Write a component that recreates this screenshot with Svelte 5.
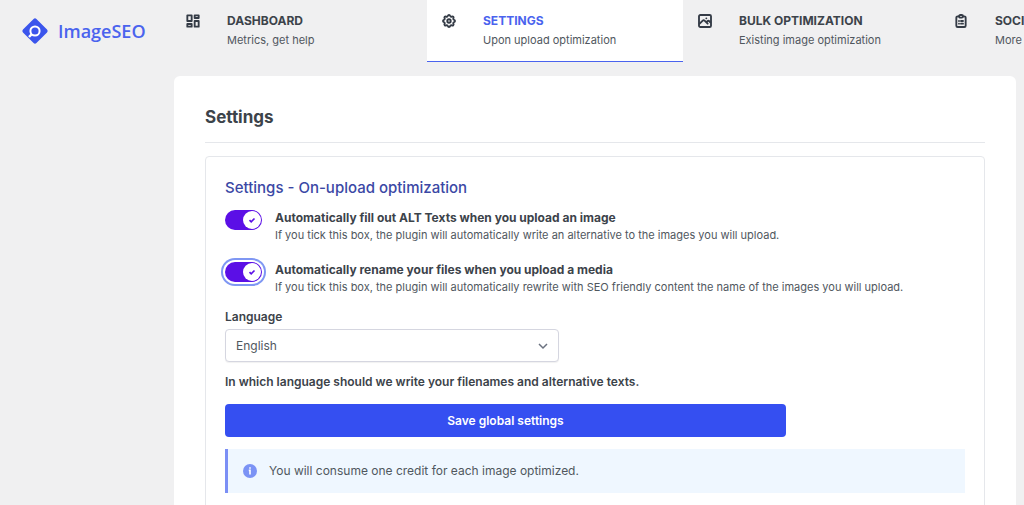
<script>
  const tabs = [
    { icon: 'grid', title: 'Dashboard', text: 'Metrics, get help' },
    { icon: 'cog', title: 'Settings', text: 'Upon upload optimization', active: true },
    { icon: 'image', title: 'Bulk optimization', text: 'Existing image optimization' },
    { icon: 'clipboard', title: 'Social media', text: 'More traffic' }
  ];

  let options = $state([
    {
      id: 'fill-alt',
      title: 'Automatically fill out ALT Texts when you upload an image',
      text: 'If you tick this box, the plugin will automatically write an alternative to the images you will upload.',
      checked: true
    },
    {
      id: 'rename-files',
      title: 'Automatically rename your files when you upload a media',
      text: 'If you tick this box, the plugin will automatically rewrite with SEO friendly content the name of the images you will upload.',
      checked: true
    }
  ]);

  let current = $state('rename-files');
  let language = $state('en');
</script>

<header>
  <a class="logo" href="#home">
    <svg width="28" height="28" viewBox="0 0 28 28">
      <rect x="4.5" y="4.5" width="19" height="19" rx="2" transform="rotate(45 14 14)" fill="#3b55ec" />
      <circle cx="14" cy="14" r="4.6" fill="none" stroke="#fff" stroke-width="2" />
      <path d="M10.8 17.2L8 20" stroke="#fff" stroke-width="2.4" />
    </svg>
    <span>ImageSEO</span>
  </a>
  <nav>
    {#each tabs as tab}
      <a class="tab" class:active={tab.active} href="#{tab.icon}">
        <svg class="icon" viewBox="0 0 24 24">
          {#if tab.icon === 'grid'}
            <path d="M3.5 3.5h6.5v8.500H3.500zM14.500 3.500h6v4h-6zM3.500 16.500h6.500v4H3.500zM14.500 12h6v8.500h-6z" />
          {:else if tab.icon === 'cog'}
            <path d="M10.325 4.317c.426-1.756 2.924-1.756 3.35 0a1.724 1.724 0 002.573 1.066c1.543-.94 3.31.826 2.37 2.37a1.724 1.724 0 001.065 2.572c1.756.426 1.756 2.924 0 3.35a1.724 1.724 0 00-1.066 2.573c.94 1.543-.826 3.31-2.37 2.37a1.724 1.724 0 00-2.572 1.065c-.426 1.756-2.924 1.756-3.35 0a1.724 1.724 0 00-2.573-1.066c-1.543.94-3.31-.826-2.37-2.37a1.724 1.724 0 00-1.065-2.572c-1.756-.426-1.756-2.924 0-3.35a1.724 1.724 0 001.066-2.573c-.94-1.543.826-3.31 2.37-2.37.996.608 2.296.07 2.572-1.065z" />
            <circle cx="12" cy="12" r="2.6" />
          {:else if tab.icon === 'image'}
            <rect x="3" y="3" width="18" height="18" rx="2" />
            <path d="M4 16l4.6-4.6a2 2 0 012.8 0L16 16m-2-2l1.6-1.6a2 2 0 012.8 0L20 14M14 8h.01" />
          {:else}
            <path d="M9 5H7a2 2 0 00-2 2v12a2 2 0 002 2h10a2 2 0 002-2V7a2 2 0 00-2-2h-2" />
            <rect x="9" y="3" width="6" height="4" rx="2" />
            <path d="M9 12h.01M12 12h3M9 16h.01M12 16h3" />
          {/if}
        </svg>
        <span class="tab-text">
          <strong>{tab.title}</strong>
          <span>{tab.text}</span>
        </span>
      </a>
    {/each}
  </nav>
</header>

<main>
  <h1>Settings</h1>
  <section>
    <h2>Settings - On-upload optimization</h2>

    <div class="options">
      {#each options as option}
        <div class="option">
          <label class="toggle" class:current={current === option.id}>
            <input
              type="checkbox"
              aria-labelledby={option.id}
              bind:checked={option.checked}
              onfocus={() => (current = option.id)}
            />
            <span class="knob">
              <svg width="10" height="10" viewBox="0 0 12 12">
                <path d="M3 6.2l2 2 4-4" />
              </svg>
            </span>
          </label>
          <div>
            <h3 id={option.id}>{option.title}</h3>
            <p>{option.text}</p>
          </div>
        </div>
      {/each}
    </div>

    <label class="label" for="language">Language</label>
    <div class="select">
      <select id="language" bind:value={language}>
        <option value="en">English</option>
        <option value="fr">French</option>
        <option value="es">Spanish</option>
      </select>
      <svg width="10" height="10" viewBox="0 0 10 10">
        <path d="M1 3l4 4 4-4" />
      </svg>
    </div>
    <p class="hint">In which language should we write your filenames and alternative texts.</p>

    <button type="button">Save global settings</button>

    <div class="notice">
      <svg width="14" height="14" viewBox="0 0 14 14">
        <circle cx="7" cy="7" r="7" fill="#7b93f5" />
        <path d="M7 3.2v1.6M5.8 6.4H7v4.2" fill="none" stroke="#fff" stroke-width="1.6" />
      </svg>
      <p>You will consume one credit for each image optimized.</p>
    </div>
  </section>
</main>

<style>
  :global(body) {
    margin: 0;
    background: #f0f0f1;
    color: #3c434a;
    font-family: Inter, "Liberation Sans", sans-serif;
    font-size: 12px;
    line-height: 16px;
    overflow-x: hidden;
  }

  h1, h2, h3, p {
    margin: 0;
  }

  a {
    color: inherit;
    text-decoration: none;
  }

  header {
    display: flex;
    overflow: hidden;
  }

  .logo {
    display: flex;
    flex: none;
    align-items: center;
    gap: 9px;
    box-sizing: border-box;
    width: 171px;
    padding-left: 21px;
    color: #4a63ee;
    font-family: "Open Sans", sans-serif;
    font-size: 18px;
    font-weight: 600;
  }

  nav {
    display: flex;
  }

  .tab {
    display: flex;
    flex: none;
    gap: 26px;
    box-sizing: border-box;
    width: 256px;
    padding: 13px 14px;
    border-bottom: 1px solid transparent;
  }

  .tab.active {
    background: #fff;
    border-bottom-color: #4a63ee;
  }

  .icon {
    width: 16px;
    height: 16px;
    fill: none;
    stroke: #343b46;
    stroke-width: 2.8;
    stroke-linecap: round;
    stroke-linejoin: round;
  }

  .tab-text {
    display: grid;
    gap: 3px;
    font-size: 11px;
    color: #50575e;
  }

  .tab-text strong {
    color: #3c434a;
    font-size: 12px;
    text-transform: uppercase;
  }

  .tab.active strong {
    color: #4a63ee;
  }

  main {
    margin: 14px 8px 0 174px;
    padding: 30px 31px;
    background: #fff;
    border-radius: 6px;
  }

  h1 {
    padding-bottom: 14px;
    border-bottom: 1px solid #e5e7eb;
    font-size: 17px;
    line-height: 22px;
  }

  section {
    margin-top: 13px;
    padding: 21px 19px;
    border: 1px solid #e5e7eb;
    border-radius: 4px;
  }

  h2 {
    margin-bottom: 12px;
    color: #3b48a5;
    font-size: 15px;
    font-weight: 500;
    line-height: 20px;
  }

  .options {
    display: grid;
    gap: 19px;
    margin-bottom: 14px;
  }

  .option {
    display: flex;
    gap: 13px;
  }

  .option p {
    margin-top: 1px;
    color: #50575e;
    font-size: 11px;
  }

  h3 {
    font-size: 12px;
  }

  .toggle {
    display: flex;
    flex: none;
    justify-content: flex-end;
    box-sizing: border-box;
    width: 37px;
    height: 20px;
    padding: 1px;
    border-radius: 10px;
    background: #5b0fe6;
    cursor: pointer;
  }

  .toggle:not(:has(:checked)) {
    justify-content: flex-start;
    background: #d1d5db;
  }

  .toggle.current {
    box-shadow: 0 0 0 2px #fff, 0 0 0 4px #7f97f3;
  }

  .toggle input {
    appearance: none;
    width: 0;
    height: 0;
    margin: 0;
  }

  .knob {
    display: grid;
    place-items: center;
    width: 18px;
    height: 18px;
    border-radius: 50%;
    background: #fff;
  }

  .knob path {
    fill: none;
    stroke: #5b0fe6;
    stroke-width: 2;
  }

  .label {
    display: block;
    margin-bottom: 4px;
    font-weight: 600;
  }

  .select {
    display: grid;
    align-items: center;
    max-width: 334px;
  }

  .select > * {
    grid-area: 1 / 1;
  }

  .select svg {
    justify-self: end;
    margin-right: 11px;
    fill: none;
    stroke: #6b7280;
    stroke-width: 1.5;
    pointer-events: none;
  }

  select {
    appearance: none;
    width: 100%;
    height: 33px;
    padding: 0 10px;
    border: 1px solid #d5d6e0;
    border-radius: 4px;
    background: #fff;
    color: #50575e;
    font: inherit;
    box-shadow: 0 1px 1px rgba(0, 0, 0, 0.06);
  }

  .hint {
    margin: 12px 0 14px;
    font-weight: 600;
  }

  button {
    display: block;
    width: 100%;
    max-width: 561px;
    height: 33px;
    border: 0;
    border-radius: 4px;
    background: #354ff1;
    color: #fff;
    font: inherit;
    font-weight: 600;
  }

  .notice {
    display: flex;
    align-items: center;
    gap: 12px;
    margin-top: 12px;
    padding: 14px 15px;
    border-left: 3px solid #7b8ff5;
    background: #eff7ff;
    color: #50575e;
  }
</style>
